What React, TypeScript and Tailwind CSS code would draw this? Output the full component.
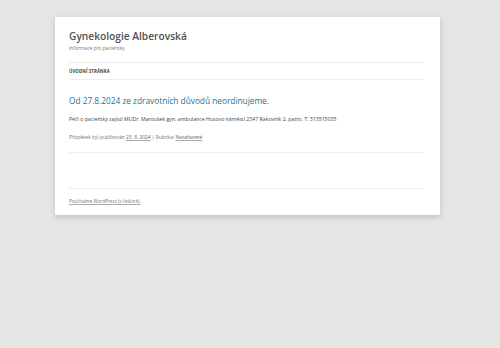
export default function App() {
  return (
    <div className="min-h-[348px] bg-[#e6e6e6] pt-[17px] pb-[20px]" style={{ fontFamily: '"Open Sans", "DejaVu Sans", sans-serif' }}>
      <div className="ml-[55px] w-[385px] h-[198px] bg-white pl-[14px] pr-[16px] pt-[12px] shadow-[0_2px_6px_rgba(100,100,100,0.3)]">
        <header>
          <h1 className="text-[10.2px] leading-[14px] font-semibold text-[#515151]">Gynekologie Alberovská</h1>
          <p className="mt-[2px] text-[4.9px] leading-[6px] text-[#757575]">Informace pro pacientky.</p>
          <nav className="mt-[11px] h-[18px] border-y border-[#ededed] flex items-center">
            <span className="text-[4.4px] font-bold uppercase text-[#444] tracking-[0.1px]">Úvodní stránka</span>
          </nav>
        </header>

        <article>
          <h2 className="mt-[15px] text-[8.3px] leading-[12px] text-[#21759b]">
            Od 27.8.2024 ze zdravotních důvodů neordinujeme.
          </h2>
          <p className="mt-[9px] text-[5.2px] leading-[7px] text-[#444]">
            Péči o pacientky zajistí MUDr. Maroušek gyn. ambulance Husovo náměstí 2347 Rakovník 2. patro. T: 313515035
          </p>
          <footer className="mt-[11px] text-[4.85px] leading-[6px] text-[#757575]">
            Příspěvek byl publikován <span className="underline decoration-[0.5px] decoration-[#aaa] text-[#5e5e5e]">23. 8. 2024</span> | Rubrika: <span className="underline decoration-[0.5px] decoration-[#aaa] text-[#5e5e5e]">Nezařazené</span>
          </footer>
        </article>

        <div className="mt-[12px] h-[37px] border-y border-[#ededed]"></div>

        <div className="mt-[9px] text-[4.6px] leading-[6px] text-[#757575]">
          <span className="underline decoration-[0.5px] decoration-[#aaa]">Používáme WordPress (v češtině).</span>
        </div>
      </div>
    </div>
  );
}
